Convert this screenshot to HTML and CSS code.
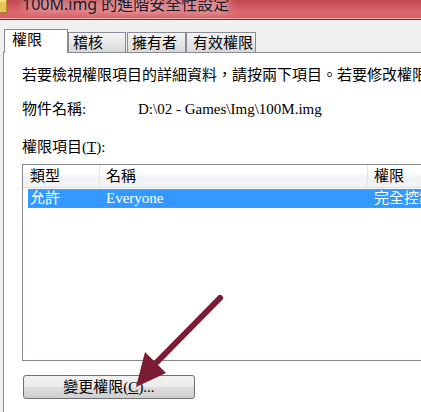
FILE: index.html
```html
<!DOCTYPE html>
<html lang="zh-Hant">
<head>
<meta charset="utf-8">
<title>100M.img 的進階安全性設定</title>
<link rel="stylesheet" href="styles.css">
</head>
<body>
<div class="window">
  <header class="titlebar">
    <svg class="folder" width="8" height="14" viewBox="0 0 8 14">
      <rect x="0" y="0" width="7" height="13" fill="#e9c25a"/>
      <rect x="0" y="0" width="7" height="2" fill="#f6dc8a"/>
      <rect x="6" y="0" width="1" height="13" fill="#b58a2c"/>
      <rect x="0" y="12" width="7" height="1" fill="#a37a26"/>
    </svg>
    <span class="title">100M.img 的進階安全性設定</span>
  </header>

  <nav class="tabs">
    <div class="tab active">權限</div>
    <div class="tab t2">稽核</div>
    <div class="tab t3">擁有者</div>
    <div class="tab t4">有效權限</div>
  </nav>

  <main class="panel">
    <p class="intro">若要檢視權限項目的詳細資料，請按兩下項目。若要修改權限項目，請按一下 [變更權限]。</p>

    <div class="objrow">
      <span class="objlabel">物件名稱:</span>
      <span class="objpath">D:\02 - Games\Img\100M.img</span>
    </div>

    <div class="permlabel">權限項目(<u>T</u>):</div>

    <div class="listbox">
      <div class="lv-header">
        <div class="h h1">類型</div>
        <div class="h h2">名稱</div>
        <div class="h h3">權限</div>
      </div>
      <div class="lv-row selected">
        <div class="c c1">允許</div>
        <div class="c c2">Everyone</div>
        <div class="c c3">完全控制</div>
      </div>
    </div>

    <button class="btn" type="button">變更權限(<u>C</u>)...</button>
  </main>

  <svg class="arrow" width="421" height="412" viewBox="0 0 421 412">
    <line x1="220" y1="298" x2="157" y2="362" stroke="#7b1c34" stroke-width="6" stroke-linecap="round"/>
    <polygon points="136,387 145,352 166,373" fill="#7b1c34"/>
  </svg>
</div>
</body>
</html>
```

FILE: styles.css
```css
* {
  box-sizing: border-box;
}

html,
body {
  margin: 0;
  padding: 0;
}

body {
  width: 421px;
  height: 412px;
  overflow: hidden;
  background: #f0f0f0;
  font-family: "Liberation Serif", "Noto Sans CJK TC", serif;
  font-size: 15px;
  color: #000;
}

.window {
  position: relative;
  width: 421px;
  height: 412px;
  overflow: hidden;
  background: #f0f0f0;
}

/* ---------- title bar ---------- */
.titlebar {
  height: 20px;
  display: flex;
  align-items: flex-start;
  overflow: hidden;
  background: linear-gradient(to bottom,
      #c4464e 0px,
      #cf5660 6px,
      #db686d 12px,
      #d45f64 18px,
      #eca8a9 18px,
      #eca8a9 19px,
      #6e2a30 19px,
      #6e2a30 20px);
}

.folder {
  flex: none;
  display: block;
}

.title {
  margin-left: 14px;
  margin-top: -4px;
  font-family: "Noto Sans", "Noto Sans CJK TC", sans-serif;
  font-size: 16px;
  line-height: 16px;
  color: #1a1a2a;
  white-space: nowrap;
  text-shadow: 0 0 8px rgba(255, 255, 255, 0.8), 0 0 14px rgba(255, 255, 255, 0.6);
}

/* ---------- tabs ---------- */
.tabs {
  height: 32px;
  display: flex;
  align-items: flex-end;
  padding-left: 4px;
}

.tab {
  height: 20px;
  border: 1px solid #898c95;
  border-bottom: none;
  background: linear-gradient(#f4f4f4, #e8e8e8 50%, #d8d8d8);
  line-height: 17px;
  padding-left: 4px;
  white-space: nowrap;
  font-family: "Noto Sans CJK TC", sans-serif;
  font-size: 15px;
}

.tab.active {
  position: relative;
  z-index: 1;
  width: 64px;
  height: 24px;
  margin-bottom: -1px;
  background: #fff;
  padding-left: 7px;
  line-height: 18px;
}

.tab.t2 {
  width: 58px;
}

.tab.t3 {
  width: 59px;
  margin-left: 1px;
}

.tab.t4 {
  width: 70px;
  padding-left: 6px;
}

/* ---------- panel ---------- */
.panel {
  margin-left: 3px;
  height: 360px;
  background: #fff;
  border-top: 1px solid #898c95;
  border-left: 1px solid #898c95;
  padding: 12px 0 0 18px;
}

.intro {
  margin: 0;
  line-height: 20px;
  white-space: nowrap;
}

.objrow {
  margin-top: 14px;
  display: flex;
  line-height: 20px;
  white-space: nowrap;
}

.objlabel {
  width: 116px;
  flex: none;
}

.permlabel {
  margin-top: 18px;
  line-height: 20px;
}

/* ---------- list view ---------- */
.listbox {
  margin-top: 7px;
  width: 460px;
  height: 197px;
  border: 1px solid #828790;
  background: #fff;
}

.lv-header {
  display: flex;
  height: 23px;
  border-bottom: 1px solid #dcdde0;
  background: linear-gradient(#ffffff 0%, #ffffff 40%, #f1f2f4 55%, #f1f2f4 100%);
  line-height: 22px;
  white-space: nowrap;
}

.h {
  flex: none;
}

.h1 {
  width: 77px;
  padding-left: 7px;
  border-right: 1px solid #e2e4e8;
}

.h2 {
  width: 268px;
  padding-left: 6px;
  border-right: 1px solid #e2e4e8;
}

.h3 {
  padding-left: 6px;
}

.lv-row {
  display: flex;
  margin-top: 1px;
  margin-left: 5px;
  height: 19px;
  line-height: 17px;
  white-space: nowrap;
}

.lv-row.selected {
  background: #3399ff;
  color: #fff;
  border: 1px dotted #c0804a;
  border-right: none;
}

.c {
  flex: none;
}

.c1 {
  width: 71px;
  padding-left: 1px;
}

.c2 {
  width: 268px;
  padding-left: 6px;
}

.c3 {
  padding-left: 6px;
}

/* ---------- button ---------- */
.btn {
  display: block;
  margin: 14px 0 0 1px;
  width: 172px;
  height: 24px;
  padding: 0;
  border: 1px solid #707070;
  border-radius: 3px;
  background: linear-gradient(#f2f2f2 0%, #ebebeb 48%, #dddddd 52%, #cfcfcf 100%);
  font-family: "Liberation Serif", "Noto Sans CJK TC", serif;
  font-size: 15px;
  line-height: 20px;
  color: #000;
  text-align: center;
}

/* ---------- annotation arrow ---------- */
.arrow {
  position: absolute;
  left: 0;
  top: 0;
  pointer-events: none;
}
```
